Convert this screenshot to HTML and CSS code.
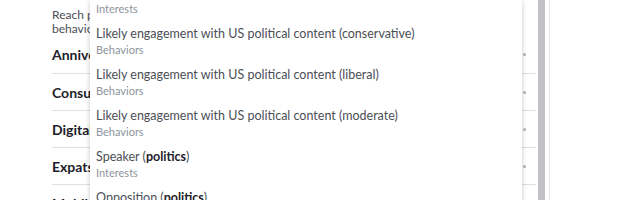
FILE: index.html
```html
<!DOCTYPE html>
<html lang="en">
<head>
  <meta charset="UTF-8" />
  <meta name="viewport" content="width=device-width, initial-scale=1.0"/>
  <title>Detailed targeting</title>
  <link rel="stylesheet" href="styles.css">
</head>
<body>
  <div class="page">
    <!-- Browse panel behind the suggestions -->
    <div class="panel">
      <p class="desc">Reach people based on purchase behaviour or intents, device<br>behaviour and more</p>
      <ul class="cats">
        <li class="cat"><span class="name">Anniversary</span><span class="dot"></span></li>
        <li class="cat"><span class="name">Consumer Classification</span><span class="dot"></span></li>
        <li class="cat"><span class="name">Digital activities</span><span class="dot"></span></li>
        <li class="cat"><span class="name">Expats</span><span class="dot"></span></li>
        <li class="cat"><span class="name">Mobile Device User</span><span class="dot"></span></li>
      </ul>
    </div>
    <div class="scroll"></div>
    <div class="side"></div>

    <!-- Suggestions dropdown -->
    <div class="dropdown">
      <ul class="options">
        <li class="option"><div class="title"><b>Politics</b></div><div class="type">Interests</div></li>
        <li class="option"><div class="title">Likely engagement with US political content (conservative)</div><div class="type">Behaviors</div></li>
        <li class="option"><div class="title">Likely engagement with US political content (liberal)</div><div class="type">Behaviors</div></li>
        <li class="option"><div class="title">Likely engagement with US political content (moderate)</div><div class="type">Behaviors</div></li>
        <li class="option"><div class="title">Speaker (<b>politics</b>)</div><div class="type">Interests</div></li>
        <li class="option"><div class="title">Opposition (<b>politics</b>)</div><div class="type">Interests</div></li>
      </ul>
    </div>
  </div>
</body>
</html>
```

FILE: styles.css
```css
* {
  box-sizing: border-box;
}

body {
  margin: 0;
  background-color: #ffffff;
  font-family: Lato, "Open Sans", sans-serif;
}

.page {
  position: relative;
  display: flex;
  height: 200px;
  overflow: hidden;
}

.panel {
  width: 538px;
  flex-shrink: 0;
  padding: 8px 2px 0 52px;
}

.desc {
  margin: 0;
  font-size: 12px;
  line-height: 14px;
  color: #4b4f56;
  white-space: nowrap;
}

.cats {
  list-style: none;
  margin: 0;
  padding: 0;
}

.cat {
  display: flex;
  align-items: center;
  justify-content: space-between;
  height: 37px;
  border-top: 1px solid #dddfe2;
  padding-right: 10px;
}

.cat:first-child {
  height: 37px;
  border-top: none;
}

.name {
  font-size: 14px;
  font-weight: 700;
  color: #1d2129;
}

.dot {
  width: 3px;
  height: 3px;
  border-radius: 50%;
  background-color: #b0b3b8;
}

.scroll {
  width: 7px;
  flex-shrink: 0;
  background-color: #c1c1c5;
}

.side {
  margin-left: 4px;
  flex: 1;
  border-left: 1px solid #e6e6e6;
}

.dropdown {
  position: absolute;
  top: 0;
  left: 90px;
  width: 432px;
  height: 220px;
  background-color: #ffffff;
  box-shadow: 0 1px 5px rgba(0, 0, 0, 0.22);
  overflow: hidden;
}

.options {
  list-style: none;
  margin: -19px 0 0;
  padding: 0;
}

.option {
  padding: 4px 6px 5px;
}

.title {
  font-size: 12.5px;
  line-height: 16px;
  color: #4b4f56;
  white-space: nowrap;
}

.title b {
  color: #1d2129;
}

.type {
  font-size: 11px;
  line-height: 16px;
  color: #8d949e;
}
```
